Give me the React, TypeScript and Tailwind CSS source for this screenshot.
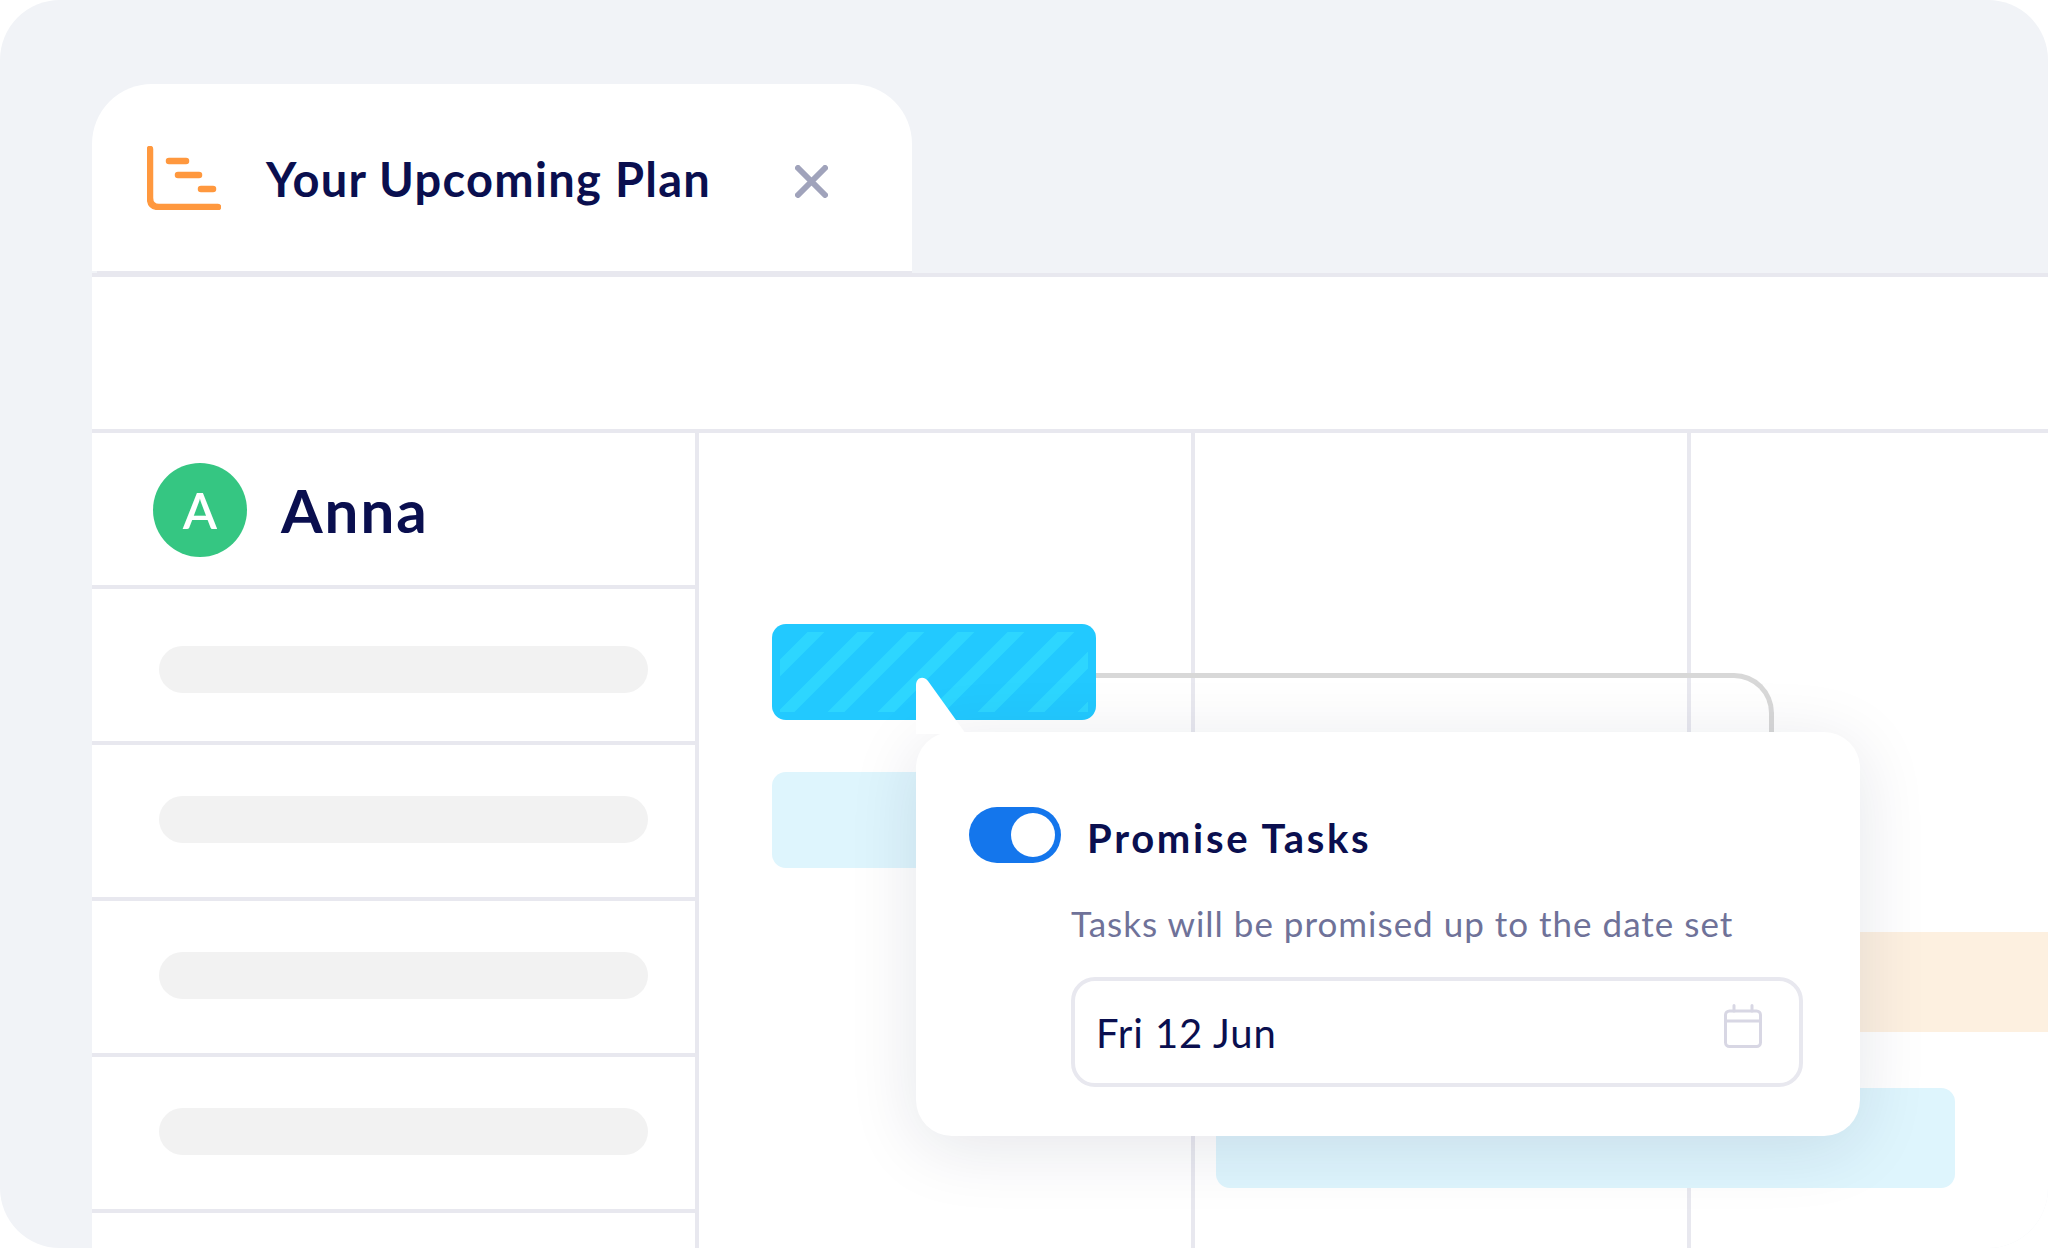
export default function App() {
  const font = "font-['Lato','Noto_Sans',sans-serif]";
  return (
    <div className={`relative flex h-[1248px] w-[2048px] flex-col overflow-hidden rounded-[60px] bg-[#f1f3f7] pl-[92px] pt-[84px] text-[#0a0f4f] ${font}`}>
      <div className="h-[189px] w-[820px] shrink-0">
        <div className="flex h-[187px] w-full items-center rounded-t-[60px] bg-white pl-[55px] pt-[8px]">
          <svg width="74" height="64" viewBox="0 0 74 64" className="mb-[7px] shrink-0" fill="none" stroke="#ff983e" strokeWidth="6.5" strokeLinecap="round">
            <path d="M3 3V52Q3 61 12 61H71" />
            <path d="M22 15H39" />
            <path d="M31 29H52" />
            <path d="M54 43H66" />
          </svg>
          <span className="mb-[5px] ml-[45px] w-[529px] shrink-0 whitespace-nowrap text-[47px] font-bold leading-none tracking-[1.3px]">Your Upcoming Plan</span>
          <svg width="33" height="33" viewBox="0 0 33 33" fill="none" stroke="#a0a3bb" strokeWidth="6" strokeLinecap="round">
            <path d="M3 3L30 30M30 3L3 30" />
          </svg>
        </div>
        <div className="ml-[5px] h-[2px] bg-[#e8e8ef]" />
      </div>
      <div className="flex min-h-0 flex-1 flex-col bg-white">
        <div className="h-[156px] shrink-0 border-t-4 border-[#e8e8ef]" />
        <div className="h-[4px] shrink-0 bg-[#e8e8ef]" />
        <div className="flex min-h-0 flex-1">
          <div className="w-[607px] shrink-0 border-r-4 border-[#e8e8ef]">
            <div className="flex h-[156px] items-center border-b-4 border-[#e8e8ef] pl-[61px] pt-[2px]">
              <div className="flex h-[94px] w-[94px] items-center justify-center rounded-full bg-[#35c682] text-[50px] font-semibold leading-none text-white">A</div>
              <span className="ml-[34px] text-[60px] font-bold leading-none tracking-[2px]">Anna</span>
            </div>
            {[0, 1, 2, 3, 4].map((i) => (
              <div key={i} className="flex h-[156px] items-center border-b-4 border-[#e8e8ef] pl-[67px]">
                <div className={`h-[47px] w-[489px] rounded-[24px] bg-[#f2f2f2] ${i === 0 ? "mt-[9px]" : "mb-[3px]"}`} />
              </div>
            ))}
          </div>
          <div className="relative flex min-w-0 flex-1">
            <div className="h-full w-[496px] shrink-0 border-r-4 border-[#e8e8ef]" />
            <div className="h-full w-[496px] shrink-0 border-r-4 border-[#e8e8ef]" />

            <div className="absolute left-[397px] top-[240px] h-[70px] w-[678px] rounded-tr-[40px] border-r-[5px] border-t-[5px] border-[#d8d8d8]" />
            <div className="absolute left-[73px] top-[191px] h-[96px] w-[324px] overflow-hidden rounded-[14px] bg-[#22c9ff]">
              <svg width="324" height="96" viewBox="0 0 324 96" className="block">
                <defs>
                  <clipPath id="inset">
                    <rect x="8" y="8" width="308" height="80" />
                  </clipPath>
                </defs>
                <g clipPath="url(#inset)" stroke="#2dd6ff" strokeWidth="12">
                  {[-30, 20, 70, 120, 170, 220, 270, 320, 370].map((x) => (
                    <path key={x} d={`M${x + 32} 0L${x - 64} 96`} />
                  ))}
                </g>
              </svg>
            </div>
            <div className="absolute left-[73px] top-[339px] h-[96px] w-[300px] rounded-[14px] bg-[#def5fd]" />
            <div className="absolute left-[1100px] right-0 top-[499px] h-[100px] bg-[#fdf0e0]" />
            <div className="absolute left-[517px] top-[655px] h-[100px] w-[739px] rounded-[14px] bg-[#def5fd]" />

            <div className="absolute left-[217px] top-[299px] h-[404px] w-[944px] rounded-[36px] bg-white pl-[53px] pt-[75px] shadow-[0_12px_70px_rgba(20,25,60,0.11)]">
              <svg width="52" height="58" viewBox="0 0 52 58" className="absolute -top-[56px] left-0">
                <path d="M0 58V9C0 2 7 -1 12 5L50 58Z" fill="#ffffff" />
              </svg>
              <div className="flex h-[56px] items-center">
                <div className="flex h-[56px] w-[92px] items-center justify-end rounded-full bg-[#1476ec] pr-[6px]">
                  <div className="h-[44px] w-[44px] rounded-full bg-white" />
                </div>
                <span className="ml-[26px] mt-[5px] text-[40px] font-bold leading-none tracking-[2.7px]">Promise Tasks</span>
              </div>
              <div className="ml-[102px] mt-[35px] whitespace-nowrap text-[35px] leading-[50px] tracking-[1px] text-[#6f7299]">Tasks will be promised up to the date set</div>
              <div className="ml-[102px] mt-[29px] flex h-[110px] w-[732px] items-center justify-between rounded-[24px] border-4 border-[#e8e8ef] pl-[21px] pr-[37px]">
                <span className="mt-[2px] text-[40px] leading-none tracking-[0.9px]">Fri 12 Jun</span>
                <svg width="38" height="44" viewBox="0 0 38 44" fill="none" stroke="#d8d7e4" strokeWidth="3" strokeLinecap="round" strokeLinejoin="round" className="mb-[12px]">
                  <rect x="1.5" y="7" width="35" height="35.5" rx="4" />
                  <path d="M1.5 17H36.5M10 1.5V7M28 1.5V7" />
                </svg>
              </div>
            </div>
          </div>
        </div>
      </div>
    </div>
  );
}
